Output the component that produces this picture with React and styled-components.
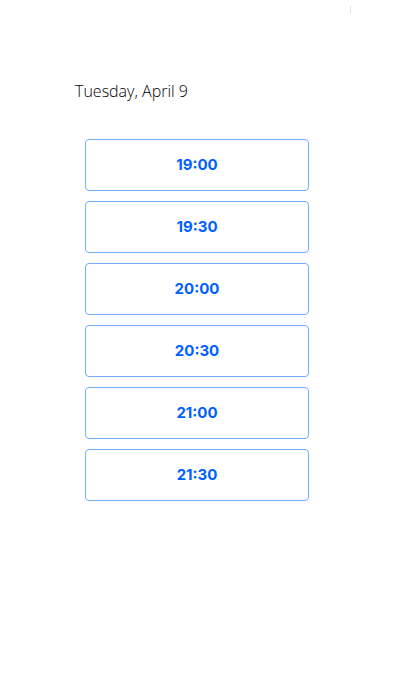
import React from "react";
import styled, { createGlobalStyle } from "styled-components";

const GlobalStyle = createGlobalStyle`
  * { box-sizing: border-box; }
  body {
    margin: 0;
    background: #fff;
    font-family: "Open Sans", sans-serif;
  }
`;

const Page = styled.main`
  padding: 0 50px;
`;

const Divider = styled.div`
  height: 15px;
  margin-right: -1px;
  padding-top: 6px;
  display: flex;
  justify-content: flex-end;
  &::after {
    content: "";
    width: 1px;
    height: 8px;
    background: #e0e0e0;
  }
`;

const Panel = styled.section`
  padding: 64px 41px 0 25px;
`;

const DateHeading = styled.h1`
  margin: 0;
  font-size: 16px;
  line-height: 24px;
  font-weight: 300;
  color: #000;
`;

const Slots = styled.ul`
  list-style: none;
  margin: 36px 0 0;
  padding: 0 0 0 10px;
  display: grid;
  gap: 10px;
`;

const SlotButton = styled.button`
  display: block;
  width: 100%;
  height: 52px;
  padding: 0;
  border: 1px solid #74adff;
  border-radius: 4px;
  background: #fff;
  color: #0060ff;
  font-family: Inter, sans-serif;
  font-size: 15px;
  line-height: 24px;
  font-weight: 700;
  cursor: pointer;
`;

const times = ["19:00", "19:30", "20:00", "20:30", "21:00", "21:30"];

export default function App() {
  return (
    <>
      <GlobalStyle />
      <Page>
        <Divider />
        <Panel>
          <DateHeading>Tuesday, April 9</DateHeading>
          <Slots>
            {times.map((time) => (
              <li key={time}>
                <SlotButton type="button">{time}</SlotButton>
              </li>
            ))}
          </Slots>
        </Panel>
      </Page>
    </>
  );
}
